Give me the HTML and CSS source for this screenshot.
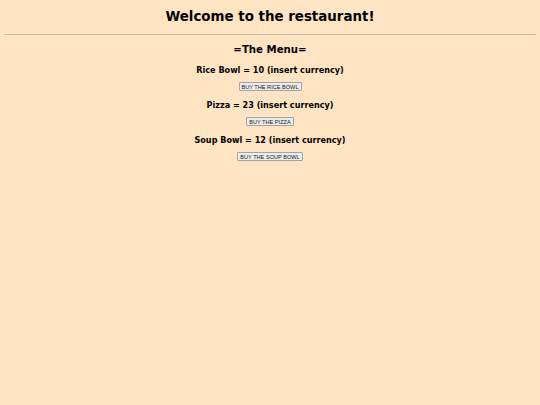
FILE: index.html
```html
<!DOCTYPE html>
<html>
<head>
<meta charset="utf-8">
<link rel="stylesheet" href="styles.css">
</head>
<body>
<h1 class="title">Welcome to the restaurant!</h1>
<hr class="rule">
<h2 class="menu-title">=The Menu=</h2>
<div class="item">
  <h3 class="item-name">Rice Bowl = 10 (insert currency)</h3>
  <button class="buy">BUY THE RICE BOWL</button>
</div>
<div class="item">
  <h3 class="item-name">Pizza = 23 (insert currency)</h3>
  <button class="buy">BUY THE PIZZA</button>
</div>
<div class="item">
  <h3 class="item-name">Soup Bowl = 12 (insert currency)</h3>
  <button class="buy">BUY THE SOUP BOWL</button>
</div>
</body>
</html>
```
FILE: styles.css
```css
html, body {
  margin: 0;
  padding: 0;
  background: #ffe4c4;
}
body {
  padding: 9px 4px 0;
  font-family: "DejaVu Sans", Verdana, sans-serif;
  color: #000;
  text-align: center;
}
.title {
  font-size: 13.4px;
  font-weight: bold;
  margin: 0;
  line-height: 16px;
}
.rule {
  margin: 9px 0 0;
  border: none;
  border-top: 1px solid #c9b8a4;
  height: 0;
}
.menu-title {
  font-size: 10.2px;
  font-weight: bold;
  margin: 9px 0 0;
  line-height: 12px;
}
.item-name {
  font-size: 8.1px;
  font-weight: bold;
  margin: 9px 0 0;
  line-height: 10px;
}
.buy {
  display: block;
  margin: 7px auto 0;
  height: 9px;
  box-sizing: border-box;
  font-family: "Liberation Sans", Arial, sans-serif;
  font-size: 5.6px;
  line-height: 6px;
  padding: 0 2px;
  background: #ebebeb;
  border: 1px solid #a3a3a3;
  border-radius: 1px;
  color: #222;
}
```
